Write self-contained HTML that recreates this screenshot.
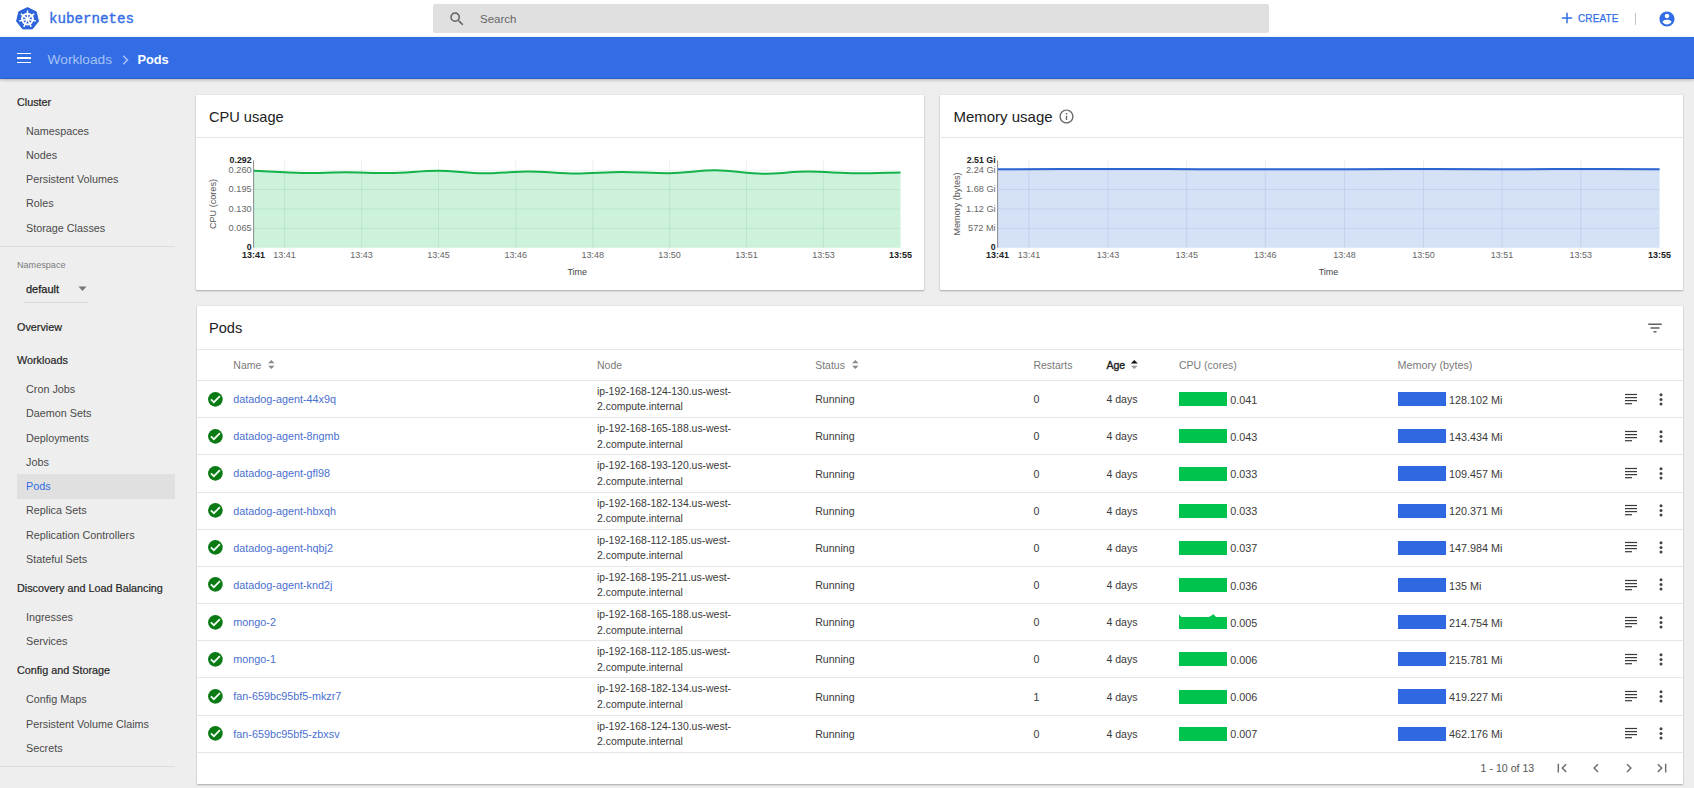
<!DOCTYPE html>
<html><head><meta charset="utf-8"><title>Pods - Kubernetes Dashboard</title>
<style>
html,body{margin:0;padding:0;}
body{width:1694px;height:788px;overflow:hidden;position:relative;background:#eeeeee;font-family:'Liberation Sans', sans-serif;}
.t{position:absolute;white-space:nowrap;z-index:2}
svg{z-index:2}
</style></head><body>
<div style="position:absolute;left:0px;top:0px;width:1694px;height:37px;background:#fff;"></div>
<svg style="position:absolute;left:0;top:0" width="60" height="37"><polygon points="27.50,7.60 36.26,11.82 38.42,21.29 32.36,28.89 22.64,28.89 16.58,21.29 18.74,11.82" fill="#2e63d9" stroke="#2e63d9" stroke-width="1" stroke-linejoin="round"/><circle cx="27.5" cy="19.1" r="5.4" fill="none" stroke="#fff" stroke-width="1.9"/><line x1="27.50" y1="17.60" x2="27.50" y2="11.10" stroke="#fff" stroke-width="1.5" stroke-linecap="round"/><line x1="28.67" y1="18.16" x2="33.75" y2="14.11" stroke="#fff" stroke-width="1.5" stroke-linecap="round"/><line x1="28.96" y1="19.43" x2="35.30" y2="20.88" stroke="#fff" stroke-width="1.5" stroke-linecap="round"/><line x1="28.15" y1="20.45" x2="30.97" y2="26.31" stroke="#fff" stroke-width="1.5" stroke-linecap="round"/><line x1="26.85" y1="20.45" x2="24.03" y2="26.31" stroke="#fff" stroke-width="1.5" stroke-linecap="round"/><line x1="26.04" y1="19.43" x2="19.70" y2="20.88" stroke="#fff" stroke-width="1.5" stroke-linecap="round"/><line x1="26.33" y1="18.16" x2="21.25" y2="14.11" stroke="#fff" stroke-width="1.5" stroke-linecap="round"/><circle cx="27.5" cy="19.1" r="1.6" fill="#fff"/></svg>
<div class="t" style="left:49px;top:8.98px;font-size:14.2px;line-height:20px;color:#326ce5;font-weight:normal;font-family:'Liberation Mono', monospace;-webkit-text-stroke:0.35px #326ce5;">kubernetes</div>
<div style="position:absolute;left:433px;top:4px;width:836px;height:29px;background:#e0e0e0;border-radius:2px;"></div>
<svg style="position:absolute;left:448px;top:10px" width="18" height="18" viewBox="0 0 24 24"><path fill="#616161" d="M15.5 14h-.79l-.28-.27A6.471 6.471 0 0 0 16 9.5 6.5 6.5 0 1 0 9.5 16c1.61 0 3.09-.59 4.23-1.57l.27.28v.79l5 4.99L20.49 19l-4.99-5zm-6 0C7.01 14 5 11.99 5 9.5S7.01 5 9.5 5 14 7.01 14 9.5 11.99 14 9.5 14z"/></svg>
<div class="t" style="left:480px;top:11.22px;font-size:11.5px;line-height:16px;color:#666;font-weight:normal;font-family:'Liberation Sans', sans-serif;">Search</div>
<svg style="position:absolute;left:1560px;top:11px" width="14" height="14"><path d="M7 1.8 V12.2 M1.8 7 H12.2" stroke="#326de6" stroke-width="1.5"/></svg>
<div class="t" style="left:1578px;top:12.14px;font-size:10px;line-height:14px;color:#326de6;font-weight:normal;font-family:'Liberation Sans', sans-serif;-webkit-text-stroke:0.25px #326de6;letter-spacing:0.1px;">CREATE</div>
<div style="position:absolute;left:1635px;top:12.5px;width:1px;height:12px;background:#c4c4c4;"></div>
<svg style="position:absolute;left:1658px;top:10px" width="18" height="18" viewBox="0 0 24 24"><path fill="#326de6" d="M12 2C6.48 2 2 6.48 2 12s4.48 10 10 10 10-4.48 10-10S17.52 2 12 2zm0 3c1.66 0 3 1.34 3 3s-1.34 3-3 3-3-1.34-3-3 1.34-3 3-3zm0 14.2c-2.5 0-4.71-1.28-6-3.22.03-1.99 4-3.08 6-3.08 1.99 0 5.97 1.09 6 3.08-1.29 1.94-3.5 3.22-6 3.22z"/></svg>
<div style="position:absolute;left:0px;top:37px;width:1694px;height:42px;background:#326de6;box-shadow:0 1px 3px rgba(0,0,0,0.25);z-index:2;"></div>
<div style="position:absolute;left:0px;top:78px;width:1694px;height:1px;background:#2c5ec9;z-index:2;"></div>
<div style="position:absolute;left:0;top:0;width:1694px;height:80px;z-index:3">
<div style="position:absolute;left:17px;top:52.6px;width:14.4px;height:1.8px;background:#fff;"></div>
<div style="position:absolute;left:17px;top:57.2px;width:14.4px;height:1.8px;background:#fff;"></div>
<div style="position:absolute;left:17px;top:61.6px;width:14.4px;height:1.8px;background:#fff;"></div>
<div class="t" style="left:47.6px;top:50.05px;font-size:13.7px;line-height:19px;color:#a8c1f4;font-weight:normal;font-family:'Liberation Sans', sans-serif;">Workloads</div>
<svg style="position:absolute;left:120px;top:54px" width="11" height="12" viewBox="0 0 11 12"><path fill="none" stroke="#a8c1f4" stroke-width="1.5" d="M3.2 1.8 L7.5 6 L3.2 10.2"/></svg>
<div class="t" style="left:137.4px;top:50.86px;font-size:12.8px;line-height:18px;color:#fff;font-weight:bold;font-family:'Liberation Sans', sans-serif;">Pods</div>
</div>
<div class="t" style="left:17px;top:94.96px;font-size:10.8px;line-height:15px;color:#262626;font-weight:normal;font-family:'Liberation Sans', sans-serif;-webkit-text-stroke:0.2px #262626;">Cluster</div>
<div class="t" style="left:26px;top:123.86px;font-size:10.8px;line-height:15px;color:#4a4a4a;font-weight:normal;font-family:'Liberation Sans', sans-serif;">Namespaces</div>
<div class="t" style="left:26px;top:148.06px;font-size:10.8px;line-height:15px;color:#4a4a4a;font-weight:normal;font-family:'Liberation Sans', sans-serif;">Nodes</div>
<div class="t" style="left:26px;top:172.26px;font-size:10.8px;line-height:15px;color:#4a4a4a;font-weight:normal;font-family:'Liberation Sans', sans-serif;">Persistent Volumes</div>
<div class="t" style="left:26px;top:196.46px;font-size:10.8px;line-height:15px;color:#4a4a4a;font-weight:normal;font-family:'Liberation Sans', sans-serif;">Roles</div>
<div class="t" style="left:26px;top:220.66px;font-size:10.8px;line-height:15px;color:#4a4a4a;font-weight:normal;font-family:'Liberation Sans', sans-serif;">Storage Classes</div>
<div style="position:absolute;left:0px;top:246px;width:175px;height:1px;background:#dcdcdc;"></div>
<div class="t" style="left:17px;top:259.15px;font-size:9.1px;line-height:13px;color:#7a7a7a;font-weight:normal;font-family:'Liberation Sans', sans-serif;">Namespace</div>
<div class="t" style="left:26px;top:281.99px;font-size:11px;line-height:15px;color:#1e1e1e;font-weight:normal;font-family:'Liberation Sans', sans-serif;-webkit-text-stroke:0.25px #1e1e1e;">default</div>
<svg style="position:absolute;left:77px;top:284px" width="11" height="9"><path d="M1.5 2.5 L9.5 2.5 L5.5 7 Z" fill="#757575"/></svg>
<div style="position:absolute;left:24px;top:301.5px;width:64px;height:1px;background:#d6d6d6;"></div>
<div class="t" style="left:17px;top:319.66px;font-size:10.8px;line-height:15px;color:#262626;font-weight:normal;font-family:'Liberation Sans', sans-serif;-webkit-text-stroke:0.2px #262626;">Overview</div>
<div class="t" style="left:17px;top:352.96px;font-size:10.8px;line-height:15px;color:#262626;font-weight:normal;font-family:'Liberation Sans', sans-serif;-webkit-text-stroke:0.2px #262626;">Workloads</div>
<div style="position:absolute;left:17px;top:474px;width:158px;height:24.5px;background:#e0e0e0;"></div>
<div class="t" style="left:26px;top:382.16px;font-size:10.8px;line-height:15px;color:#4a4a4a;font-weight:normal;font-family:'Liberation Sans', sans-serif;">Cron Jobs</div>
<div class="t" style="left:26px;top:406.42px;font-size:10.8px;line-height:15px;color:#4a4a4a;font-weight:normal;font-family:'Liberation Sans', sans-serif;">Daemon Sets</div>
<div class="t" style="left:26px;top:430.68px;font-size:10.8px;line-height:15px;color:#4a4a4a;font-weight:normal;font-family:'Liberation Sans', sans-serif;">Deployments</div>
<div class="t" style="left:26px;top:454.94px;font-size:10.8px;line-height:15px;color:#4a4a4a;font-weight:normal;font-family:'Liberation Sans', sans-serif;">Jobs</div>
<div class="t" style="left:26px;top:479.20px;font-size:10.8px;line-height:15px;color:#326de6;font-weight:normal;font-family:'Liberation Sans', sans-serif;">Pods</div>
<div class="t" style="left:26px;top:503.46px;font-size:10.8px;line-height:15px;color:#4a4a4a;font-weight:normal;font-family:'Liberation Sans', sans-serif;">Replica Sets</div>
<div class="t" style="left:26px;top:527.72px;font-size:10.8px;line-height:15px;color:#4a4a4a;font-weight:normal;font-family:'Liberation Sans', sans-serif;">Replication Controllers</div>
<div class="t" style="left:26px;top:551.98px;font-size:10.8px;line-height:15px;color:#4a4a4a;font-weight:normal;font-family:'Liberation Sans', sans-serif;">Stateful Sets</div>
<div class="t" style="left:17px;top:581.06px;font-size:10.8px;line-height:15px;color:#262626;font-weight:normal;font-family:'Liberation Sans', sans-serif;-webkit-text-stroke:0.2px #262626;">Discovery and Load Balancing</div>
<div class="t" style="left:26px;top:610.16px;font-size:10.8px;line-height:15px;color:#4a4a4a;font-weight:normal;font-family:'Liberation Sans', sans-serif;">Ingresses</div>
<div class="t" style="left:26px;top:634.36px;font-size:10.8px;line-height:15px;color:#4a4a4a;font-weight:normal;font-family:'Liberation Sans', sans-serif;">Services</div>
<div class="t" style="left:17px;top:663.36px;font-size:10.8px;line-height:15px;color:#262626;font-weight:normal;font-family:'Liberation Sans', sans-serif;-webkit-text-stroke:0.2px #262626;">Config and Storage</div>
<div class="t" style="left:26px;top:692.36px;font-size:10.8px;line-height:15px;color:#4a4a4a;font-weight:normal;font-family:'Liberation Sans', sans-serif;">Config Maps</div>
<div class="t" style="left:26px;top:716.56px;font-size:10.8px;line-height:15px;color:#4a4a4a;font-weight:normal;font-family:'Liberation Sans', sans-serif;">Persistent Volume Claims</div>
<div class="t" style="left:26px;top:740.76px;font-size:10.8px;line-height:15px;color:#4a4a4a;font-weight:normal;font-family:'Liberation Sans', sans-serif;">Secrets</div>
<div style="position:absolute;left:0px;top:765.5px;width:175px;height:1px;background:#dcdcdc;"></div>
<div style="position:absolute;left:196px;top:94.5px;width:727.5px;height:195.3px;background:#fff;box-shadow:0 1px 2px rgba(0,0,0,0.28),0 0 1px rgba(0,0,0,0.2);border-radius:1px"></div>
<div style="position:absolute;left:940px;top:94.5px;width:743px;height:195.3px;background:#fff;box-shadow:0 1px 2px rgba(0,0,0,0.28),0 0 1px rgba(0,0,0,0.2);border-radius:1px"></div>
<div style="position:absolute;left:196.5px;top:306px;width:1486px;height:478px;background:#fff;box-shadow:0 1px 2px rgba(0,0,0,0.28),0 0 1px rgba(0,0,0,0.2);border-radius:1px"></div>
<div class="t" style="left:209px;top:106.74px;font-size:14.6px;line-height:20px;color:#212121;font-weight:normal;font-family:'Liberation Sans', sans-serif;">CPU usage</div>
<div style="position:absolute;left:196px;top:137px;width:728px;height:1px;background:#e6e6e6;"></div>
<div class="t" style="left:953.4px;top:106.10px;font-size:15px;line-height:21px;color:#212121;font-weight:normal;font-family:'Liberation Sans', sans-serif;">Memory usage</div>
<svg style="position:absolute;left:1058px;top:108px" width="17" height="17" viewBox="0 0 24 24"><path fill="#6a6a6a" d="M11 7h2v2h-2zm0 4h2v6h-2zm1-9C6.48 2 2 6.48 2 12s4.48 10 10 10 10-4.48 10-10S17.52 2 12 2zm0 18c-4.41 0-8-3.59-8-8s3.59-8 8-8 8 3.59 8 8-3.59 8-8 8z"/></svg>
<div style="position:absolute;left:940.5px;top:137px;width:742.5px;height:1px;background:#e6e6e6;"></div>
<svg style="position:absolute;left:0;top:0;z-index:1" width="1694" height="300"><path d="M253.6,170.8 C261.67,170.96 286.60,172.89 302,173 C317.40,173.11 331.33,172.30 346,172.3 C360.67,172.30 374.67,173.11 390,173 C405.33,172.89 422.50,170.78 438,170.8 C453.50,170.82 467.90,173.24 483,173.3 C498.10,173.36 513.10,171.58 528.6,171.6 C544.10,171.62 560.55,173.57 576,173.6 C591.45,173.63 605.72,172.03 621.3,172 C636.88,171.97 653.73,173.32 669.5,173.2 C685.27,173.08 700.40,170.26 715.9,170.3 C731.40,170.34 747.18,173.61 762.5,173.7 C777.82,173.79 792.25,171.64 807.8,171.6 C823.35,171.56 840.35,173.14 855.8,173.2 C871.25,173.26 893.05,172.46 900.5,172.4 L900.5,247.7 L253.6,247.7 Z" fill="#ccf2dc"/><line x1="253.6" y1="170.3" x2="900.5" y2="170.3" stroke="rgba(0,80,30,0.075)" stroke-width="1"/><line x1="253.6" y1="189.6" x2="900.5" y2="189.6" stroke="rgba(0,80,30,0.075)" stroke-width="1"/><line x1="253.6" y1="209.0" x2="900.5" y2="209.0" stroke="rgba(0,80,30,0.075)" stroke-width="1"/><line x1="253.6" y1="228.4" x2="900.5" y2="228.4" stroke="rgba(0,80,30,0.075)" stroke-width="1"/><line x1="284.6" y1="160.3" x2="284.6" y2="247.7" stroke="rgba(0,80,30,0.075)" stroke-width="1"/><line x1="361.6" y1="160.3" x2="361.6" y2="247.7" stroke="rgba(0,80,30,0.075)" stroke-width="1"/><line x1="438.6" y1="160.3" x2="438.6" y2="247.7" stroke="rgba(0,80,30,0.075)" stroke-width="1"/><line x1="515.8" y1="160.3" x2="515.8" y2="247.7" stroke="rgba(0,80,30,0.075)" stroke-width="1"/><line x1="592.8" y1="160.3" x2="592.8" y2="247.7" stroke="rgba(0,80,30,0.075)" stroke-width="1"/><line x1="669.6" y1="160.3" x2="669.6" y2="247.7" stroke="rgba(0,80,30,0.075)" stroke-width="1"/><line x1="746.6" y1="160.3" x2="746.6" y2="247.7" stroke="rgba(0,80,30,0.075)" stroke-width="1"/><line x1="823.4" y1="160.3" x2="823.4" y2="247.7" stroke="rgba(0,80,30,0.075)" stroke-width="1"/><path d="M253.6,170.8 C261.67,170.96 286.60,172.89 302,173 C317.40,173.11 331.33,172.30 346,172.3 C360.67,172.30 374.67,173.11 390,173 C405.33,172.89 422.50,170.78 438,170.8 C453.50,170.82 467.90,173.24 483,173.3 C498.10,173.36 513.10,171.58 528.6,171.6 C544.10,171.62 560.55,173.57 576,173.6 C591.45,173.63 605.72,172.03 621.3,172 C636.88,171.97 653.73,173.32 669.5,173.2 C685.27,173.08 700.40,170.26 715.9,170.3 C731.40,170.34 747.18,173.61 762.5,173.7 C777.82,173.79 792.25,171.64 807.8,171.6 C823.35,171.56 840.35,173.14 855.8,173.2 C871.25,173.26 893.05,172.46 900.5,172.4" fill="none" stroke="#13b24a" stroke-width="2"/><line x1="253.6" y1="160.3" x2="253.6" y2="247.7" stroke="#8a8a8a" stroke-width="1"/></svg>
<div class="t" style="right:1442.4px;top:154.15px;font-size:8.8px;line-height:12px;color:#222;font-weight:bold;font-family:'Liberation Sans', sans-serif;">0.292</div>
<div class="t" style="right:1442.4px;top:163.81px;font-size:9.2px;line-height:13px;color:#666;font-weight:normal;font-family:'Liberation Sans', sans-serif;">0.260</div>
<div class="t" style="right:1442.4px;top:183.11px;font-size:9.2px;line-height:13px;color:#666;font-weight:normal;font-family:'Liberation Sans', sans-serif;">0.195</div>
<div class="t" style="right:1442.4px;top:202.51px;font-size:9.2px;line-height:13px;color:#666;font-weight:normal;font-family:'Liberation Sans', sans-serif;">0.130</div>
<div class="t" style="right:1442.4px;top:221.91px;font-size:9.2px;line-height:13px;color:#666;font-weight:normal;font-family:'Liberation Sans', sans-serif;">0.065</div>
<div class="t" style="right:1442.4px;top:241.45px;font-size:8.8px;line-height:12px;color:#222;font-weight:bold;font-family:'Liberation Sans', sans-serif;">0</div>
<div class="t" style="left:53.599999999999994px;width:400px;text-align:center;top:249.18px;font-size:9px;line-height:13px;color:#222;font-weight:bold;font-family:'Liberation Sans', sans-serif;">13:41</div>
<div class="t" style="left:84.60000000000002px;width:400px;text-align:center;top:249.18px;font-size:9px;line-height:13px;color:#666;font-weight:normal;font-family:'Liberation Sans', sans-serif;">13:41</div>
<div class="t" style="left:161.60000000000002px;width:400px;text-align:center;top:249.18px;font-size:9px;line-height:13px;color:#666;font-weight:normal;font-family:'Liberation Sans', sans-serif;">13:43</div>
<div class="t" style="left:238.60000000000002px;width:400px;text-align:center;top:249.18px;font-size:9px;line-height:13px;color:#666;font-weight:normal;font-family:'Liberation Sans', sans-serif;">13:45</div>
<div class="t" style="left:315.79999999999995px;width:400px;text-align:center;top:249.18px;font-size:9px;line-height:13px;color:#666;font-weight:normal;font-family:'Liberation Sans', sans-serif;">13:46</div>
<div class="t" style="left:392.79999999999995px;width:400px;text-align:center;top:249.18px;font-size:9px;line-height:13px;color:#666;font-weight:normal;font-family:'Liberation Sans', sans-serif;">13:48</div>
<div class="t" style="left:469.6px;width:400px;text-align:center;top:249.18px;font-size:9px;line-height:13px;color:#666;font-weight:normal;font-family:'Liberation Sans', sans-serif;">13:50</div>
<div class="t" style="left:546.6px;width:400px;text-align:center;top:249.18px;font-size:9px;line-height:13px;color:#666;font-weight:normal;font-family:'Liberation Sans', sans-serif;">13:51</div>
<div class="t" style="left:623.4px;width:400px;text-align:center;top:249.18px;font-size:9px;line-height:13px;color:#666;font-weight:normal;font-family:'Liberation Sans', sans-serif;">13:53</div>
<div class="t" style="left:700.5px;width:400px;text-align:center;top:249.18px;font-size:9px;line-height:13px;color:#222;font-weight:bold;font-family:'Liberation Sans', sans-serif;">13:55</div>
<div class="t" style="left:377.29999999999995px;width:400px;text-align:center;top:266.38px;font-size:9px;line-height:13px;color:#444;font-weight:normal;font-family:'Liberation Sans', sans-serif;">Time</div>
<div class="t" style="left:152.8px;top:197px;width:120px;text-align:center;font-size:9.1px;line-height:14px;color:#555;transform:rotate(-90deg)">CPU (cores)</div>
<svg style="position:absolute;left:0;top:0;z-index:1" width="1694" height="300"><path d="M997.6,169.3 C1014.67,169.27 1066.27,168.91 1100,168.9 C1133.73,168.89 1166.67,169.17 1200,169.2 C1233.33,169.23 1266.67,169.31 1300,169.3 C1333.33,169.29 1366.67,169.11 1400,169.1 C1433.33,169.09 1470.00,169.21 1500,169.2 C1530.00,169.19 1553.40,168.99 1580,169.0 C1606.60,169.01 1646.33,169.28 1659.6,169.3 L1659.6,247.7 L997.6,247.7 Z" fill="#d5e1f7"/><line x1="997.6" y1="170.3" x2="1659.6" y2="170.3" stroke="rgba(0,30,90,0.075)" stroke-width="1"/><line x1="997.6" y1="189.6" x2="1659.6" y2="189.6" stroke="rgba(0,30,90,0.075)" stroke-width="1"/><line x1="997.6" y1="209.0" x2="1659.6" y2="209.0" stroke="rgba(0,30,90,0.075)" stroke-width="1"/><line x1="997.6" y1="228.4" x2="1659.6" y2="228.4" stroke="rgba(0,30,90,0.075)" stroke-width="1"/><line x1="1028.9" y1="160.3" x2="1028.9" y2="247.7" stroke="rgba(0,30,90,0.075)" stroke-width="1"/><line x1="1108" y1="160.3" x2="1108" y2="247.7" stroke="rgba(0,30,90,0.075)" stroke-width="1"/><line x1="1186.7" y1="160.3" x2="1186.7" y2="247.7" stroke="rgba(0,30,90,0.075)" stroke-width="1"/><line x1="1265.3" y1="160.3" x2="1265.3" y2="247.7" stroke="rgba(0,30,90,0.075)" stroke-width="1"/><line x1="1344.6" y1="160.3" x2="1344.6" y2="247.7" stroke="rgba(0,30,90,0.075)" stroke-width="1"/><line x1="1423.5" y1="160.3" x2="1423.5" y2="247.7" stroke="rgba(0,30,90,0.075)" stroke-width="1"/><line x1="1502.1" y1="160.3" x2="1502.1" y2="247.7" stroke="rgba(0,30,90,0.075)" stroke-width="1"/><line x1="1580.8" y1="160.3" x2="1580.8" y2="247.7" stroke="rgba(0,30,90,0.075)" stroke-width="1"/><path d="M997.6,169.3 C1014.67,169.27 1066.27,168.91 1100,168.9 C1133.73,168.89 1166.67,169.17 1200,169.2 C1233.33,169.23 1266.67,169.31 1300,169.3 C1333.33,169.29 1366.67,169.11 1400,169.1 C1433.33,169.09 1470.00,169.21 1500,169.2 C1530.00,169.19 1553.40,168.99 1580,169.0 C1606.60,169.01 1646.33,169.28 1659.6,169.3" fill="none" stroke="#2c64d2" stroke-width="2"/><line x1="997.6" y1="160.3" x2="997.6" y2="247.7" stroke="#8a8a8a" stroke-width="1"/></svg>
<div class="t" style="right:698.4px;top:154.15px;font-size:8.8px;line-height:12px;color:#222;font-weight:bold;font-family:'Liberation Sans', sans-serif;">2.51 Gi</div>
<div class="t" style="right:698.4px;top:163.81px;font-size:9.2px;line-height:13px;color:#666;font-weight:normal;font-family:'Liberation Sans', sans-serif;">2.24 Gi</div>
<div class="t" style="right:698.4px;top:183.11px;font-size:9.2px;line-height:13px;color:#666;font-weight:normal;font-family:'Liberation Sans', sans-serif;">1.68 Gi</div>
<div class="t" style="right:698.4px;top:202.51px;font-size:9.2px;line-height:13px;color:#666;font-weight:normal;font-family:'Liberation Sans', sans-serif;">1.12 Gi</div>
<div class="t" style="right:698.4px;top:221.91px;font-size:9.2px;line-height:13px;color:#666;font-weight:normal;font-family:'Liberation Sans', sans-serif;">572 Mi</div>
<div class="t" style="right:698.4px;top:241.45px;font-size:8.8px;line-height:12px;color:#222;font-weight:bold;font-family:'Liberation Sans', sans-serif;">0</div>
<div class="t" style="left:797.6px;width:400px;text-align:center;top:249.18px;font-size:9px;line-height:13px;color:#222;font-weight:bold;font-family:'Liberation Sans', sans-serif;">13:41</div>
<div class="t" style="left:828.9000000000001px;width:400px;text-align:center;top:249.18px;font-size:9px;line-height:13px;color:#666;font-weight:normal;font-family:'Liberation Sans', sans-serif;">13:41</div>
<div class="t" style="left:908px;width:400px;text-align:center;top:249.18px;font-size:9px;line-height:13px;color:#666;font-weight:normal;font-family:'Liberation Sans', sans-serif;">13:43</div>
<div class="t" style="left:986.7px;width:400px;text-align:center;top:249.18px;font-size:9px;line-height:13px;color:#666;font-weight:normal;font-family:'Liberation Sans', sans-serif;">13:45</div>
<div class="t" style="left:1065.3px;width:400px;text-align:center;top:249.18px;font-size:9px;line-height:13px;color:#666;font-weight:normal;font-family:'Liberation Sans', sans-serif;">13:46</div>
<div class="t" style="left:1144.6px;width:400px;text-align:center;top:249.18px;font-size:9px;line-height:13px;color:#666;font-weight:normal;font-family:'Liberation Sans', sans-serif;">13:48</div>
<div class="t" style="left:1223.5px;width:400px;text-align:center;top:249.18px;font-size:9px;line-height:13px;color:#666;font-weight:normal;font-family:'Liberation Sans', sans-serif;">13:50</div>
<div class="t" style="left:1302.1px;width:400px;text-align:center;top:249.18px;font-size:9px;line-height:13px;color:#666;font-weight:normal;font-family:'Liberation Sans', sans-serif;">13:51</div>
<div class="t" style="left:1380.8px;width:400px;text-align:center;top:249.18px;font-size:9px;line-height:13px;color:#666;font-weight:normal;font-family:'Liberation Sans', sans-serif;">13:53</div>
<div class="t" style="left:1459.6px;width:400px;text-align:center;top:249.18px;font-size:9px;line-height:13px;color:#222;font-weight:bold;font-family:'Liberation Sans', sans-serif;">13:55</div>
<div class="t" style="left:1128.5px;width:400px;text-align:center;top:266.38px;font-size:9px;line-height:13px;color:#444;font-weight:normal;font-family:'Liberation Sans', sans-serif;">Time</div>
<div class="t" style="left:896.5px;top:197px;width:120px;text-align:center;font-size:9.1px;line-height:14px;color:#555;transform:rotate(-90deg)">Memory (bytes)</div>
<div class="t" style="left:209px;top:317.94px;font-size:14.6px;line-height:20px;color:#212121;font-weight:normal;font-family:'Liberation Sans', sans-serif;">Pods</div>
<svg style="position:absolute;left:1646px;top:318.5px" width="18" height="18" viewBox="0 0 24 24"><path fill="#616161" d="M10 18h4v-2h-4v2zM3 6v2h18V6H3zm3 7h12v-2H6v2z"/></svg>
<div style="position:absolute;left:196.5px;top:349px;width:1486px;height:1px;background:#e6e6e6;"></div>
<div class="t" style="left:233.3px;top:358.26px;font-size:10.5px;line-height:15px;color:#7a7a7a;font-weight:normal;font-family:'Liberation Sans', sans-serif;">Name</div>
<svg style="position:absolute;left:267px;top:359px" width="9" height="11"><path d="M1 4.3 L4.3 1 L7.6 4.3 Z M1 6.7 L4.3 10 L7.6 6.7 Z" fill="#8a8a8a"/></svg>
<div class="t" style="left:597px;top:358.26px;font-size:10.5px;line-height:15px;color:#7a7a7a;font-weight:normal;font-family:'Liberation Sans', sans-serif;">Node</div>
<div class="t" style="left:815.2px;top:358.26px;font-size:10.5px;line-height:15px;color:#7a7a7a;font-weight:normal;font-family:'Liberation Sans', sans-serif;">Status</div>
<svg style="position:absolute;left:851px;top:359px" width="9" height="11"><path d="M1 4.3 L4.3 1 L7.6 4.3 Z M1 6.7 L4.3 10 L7.6 6.7 Z" fill="#8a8a8a"/></svg>
<div class="t" style="left:1033.4px;top:358.26px;font-size:10.5px;line-height:15px;color:#7a7a7a;font-weight:normal;font-family:'Liberation Sans', sans-serif;">Restarts</div>
<div class="t" style="left:1106.4px;top:358.23px;font-size:10.6px;line-height:15px;color:#1a1a1a;font-weight:normal;font-family:'Liberation Sans', sans-serif;-webkit-text-stroke:0.35px #1a1a1a;">Age</div>
<svg style="position:absolute;left:1130px;top:359px" width="9" height="11"><path d="M0.8 4.6 L4.3 1 L7.8 4.6 Z" fill="#111"/><path d="M1 6.7 L4.3 10 L7.6 6.7 Z" fill="#9a9a9a"/></svg>
<div class="t" style="left:1179px;top:358.26px;font-size:10.5px;line-height:15px;color:#7a7a7a;font-weight:normal;font-family:'Liberation Sans', sans-serif;">CPU (cores)</div>
<div class="t" style="left:1397.4px;top:358.16px;font-size:10.8px;line-height:15px;color:#7a7a7a;font-weight:normal;font-family:'Liberation Sans', sans-serif;">Memory (bytes)</div>
<div style="position:absolute;left:196.5px;top:380px;width:1486px;height:1px;background:#e6e6e6;"></div>
<svg style="position:absolute;left:207.6px;top:391.60px" width="15" height="15" viewBox="0 0 15 15"><circle cx="7.4" cy="7.4" r="7.3" fill="#0a7a14"/><path d="M2.9 7.3 L5.9 10.2 L11.9 4.2" fill="none" stroke="#f4fff4" stroke-width="1.8"/></svg>
<div class="t" style="left:233.3px;top:392.06px;font-size:10.8px;line-height:15px;color:#4a70d0;font-weight:normal;font-family:'Liberation Sans', sans-serif;">datadog-agent-44x9q</div>
<div class="t" style="left:597px;top:384.08px;font-size:10.45px;line-height:15px;color:#3a3a3a;font-weight:normal;font-family:'Liberation Sans', sans-serif;">ip-192-168-124-130.us-west-</div>
<div class="t" style="left:597px;top:399.48px;font-size:10.45px;line-height:15px;color:#3a3a3a;font-weight:normal;font-family:'Liberation Sans', sans-serif;">2.compute.internal</div>
<div class="t" style="left:815.2px;top:392.23px;font-size:10.6px;line-height:15px;color:#3a3a3a;font-weight:normal;font-family:'Liberation Sans', sans-serif;">Running</div>
<div class="t" style="left:1033.4px;top:392.23px;font-size:10.6px;line-height:15px;color:#3a3a3a;font-weight:normal;font-family:'Liberation Sans', sans-serif;">0</div>
<div class="t" style="left:1106.4px;top:392.23px;font-size:10.6px;line-height:15px;color:#3a3a3a;font-weight:normal;font-family:'Liberation Sans', sans-serif;">4 days</div>
<div style="position:absolute;left:1179px;top:392.2px;width:48px;height:14px;background:#00c34e;"></div>
<div class="t" style="left:1230.3px;top:392.66px;font-size:10.8px;line-height:15px;color:#3a3a3a;font-weight:normal;font-family:'Liberation Sans', sans-serif;">0.041</div>
<div style="position:absolute;left:1398px;top:392.1px;width:48px;height:14.2px;background:#2f68e0;"></div>
<div class="t" style="left:1449px;top:392.66px;font-size:10.8px;line-height:15px;color:#3a3a3a;font-weight:normal;font-family:'Liberation Sans', sans-serif;">128.102 Mi</div>
<svg style="position:absolute;left:1624px;top:392.80px" width="14" height="12"><g fill="#3a3a3a"><rect x="1" y="0.9" width="12" height="1.2"/><rect x="1" y="4.0" width="12" height="1.2"/><rect x="1" y="7.0" width="12" height="1.2"/><rect x="1" y="10.1" width="7" height="1.2"/></g></svg>
<svg style="position:absolute;left:1658px;top:392.50px" width="6" height="14"><g fill="#444"><circle cx="3" cy="1.8" r="1.5"/><circle cx="3" cy="6.4" r="1.5"/><circle cx="3" cy="11" r="1.5"/></g></svg>
<div style="position:absolute;left:196.5px;top:417.17px;width:1486px;height:1px;background:#e6e6e6;"></div>
<svg style="position:absolute;left:207.6px;top:428.77px" width="15" height="15" viewBox="0 0 15 15"><circle cx="7.4" cy="7.4" r="7.3" fill="#0a7a14"/><path d="M2.9 7.3 L5.9 10.2 L11.9 4.2" fill="none" stroke="#f4fff4" stroke-width="1.8"/></svg>
<div class="t" style="left:233.3px;top:429.23px;font-size:10.8px;line-height:15px;color:#4a70d0;font-weight:normal;font-family:'Liberation Sans', sans-serif;">datadog-agent-8ngmb</div>
<div class="t" style="left:597px;top:421.25px;font-size:10.45px;line-height:15px;color:#3a3a3a;font-weight:normal;font-family:'Liberation Sans', sans-serif;">ip-192-168-165-188.us-west-</div>
<div class="t" style="left:597px;top:436.65px;font-size:10.45px;line-height:15px;color:#3a3a3a;font-weight:normal;font-family:'Liberation Sans', sans-serif;">2.compute.internal</div>
<div class="t" style="left:815.2px;top:429.40px;font-size:10.6px;line-height:15px;color:#3a3a3a;font-weight:normal;font-family:'Liberation Sans', sans-serif;">Running</div>
<div class="t" style="left:1033.4px;top:429.40px;font-size:10.6px;line-height:15px;color:#3a3a3a;font-weight:normal;font-family:'Liberation Sans', sans-serif;">0</div>
<div class="t" style="left:1106.4px;top:429.40px;font-size:10.6px;line-height:15px;color:#3a3a3a;font-weight:normal;font-family:'Liberation Sans', sans-serif;">4 days</div>
<div style="position:absolute;left:1179px;top:429.37px;width:48px;height:14px;background:#00c34e;"></div>
<div class="t" style="left:1230.3px;top:429.83px;font-size:10.8px;line-height:15px;color:#3a3a3a;font-weight:normal;font-family:'Liberation Sans', sans-serif;">0.043</div>
<div style="position:absolute;left:1398px;top:429.27000000000004px;width:48px;height:14.2px;background:#2f68e0;"></div>
<div class="t" style="left:1449px;top:429.83px;font-size:10.8px;line-height:15px;color:#3a3a3a;font-weight:normal;font-family:'Liberation Sans', sans-serif;">143.434 Mi</div>
<svg style="position:absolute;left:1624px;top:429.97px" width="14" height="12"><g fill="#3a3a3a"><rect x="1" y="0.9" width="12" height="1.2"/><rect x="1" y="4.0" width="12" height="1.2"/><rect x="1" y="7.0" width="12" height="1.2"/><rect x="1" y="10.1" width="7" height="1.2"/></g></svg>
<svg style="position:absolute;left:1658px;top:429.67px" width="6" height="14"><g fill="#444"><circle cx="3" cy="1.8" r="1.5"/><circle cx="3" cy="6.4" r="1.5"/><circle cx="3" cy="11" r="1.5"/></g></svg>
<div style="position:absolute;left:196.5px;top:454.34000000000003px;width:1486px;height:1px;background:#e6e6e6;"></div>
<svg style="position:absolute;left:207.6px;top:465.94px" width="15" height="15" viewBox="0 0 15 15"><circle cx="7.4" cy="7.4" r="7.3" fill="#0a7a14"/><path d="M2.9 7.3 L5.9 10.2 L11.9 4.2" fill="none" stroke="#f4fff4" stroke-width="1.8"/></svg>
<div class="t" style="left:233.3px;top:466.40px;font-size:10.8px;line-height:15px;color:#4a70d0;font-weight:normal;font-family:'Liberation Sans', sans-serif;">datadog-agent-gfl98</div>
<div class="t" style="left:597px;top:458.42px;font-size:10.45px;line-height:15px;color:#3a3a3a;font-weight:normal;font-family:'Liberation Sans', sans-serif;">ip-192-168-193-120.us-west-</div>
<div class="t" style="left:597px;top:473.82px;font-size:10.45px;line-height:15px;color:#3a3a3a;font-weight:normal;font-family:'Liberation Sans', sans-serif;">2.compute.internal</div>
<div class="t" style="left:815.2px;top:466.57px;font-size:10.6px;line-height:15px;color:#3a3a3a;font-weight:normal;font-family:'Liberation Sans', sans-serif;">Running</div>
<div class="t" style="left:1033.4px;top:466.57px;font-size:10.6px;line-height:15px;color:#3a3a3a;font-weight:normal;font-family:'Liberation Sans', sans-serif;">0</div>
<div class="t" style="left:1106.4px;top:466.57px;font-size:10.6px;line-height:15px;color:#3a3a3a;font-weight:normal;font-family:'Liberation Sans', sans-serif;">4 days</div>
<div style="position:absolute;left:1179px;top:466.53999999999996px;width:48px;height:14px;background:#00c34e;"></div>
<div class="t" style="left:1230.3px;top:467.00px;font-size:10.8px;line-height:15px;color:#3a3a3a;font-weight:normal;font-family:'Liberation Sans', sans-serif;">0.033</div>
<div style="position:absolute;left:1398px;top:466.44px;width:48px;height:14.2px;background:#2f68e0;"></div>
<div class="t" style="left:1449px;top:467.00px;font-size:10.8px;line-height:15px;color:#3a3a3a;font-weight:normal;font-family:'Liberation Sans', sans-serif;">109.457 Mi</div>
<svg style="position:absolute;left:1624px;top:467.14px" width="14" height="12"><g fill="#3a3a3a"><rect x="1" y="0.9" width="12" height="1.2"/><rect x="1" y="4.0" width="12" height="1.2"/><rect x="1" y="7.0" width="12" height="1.2"/><rect x="1" y="10.1" width="7" height="1.2"/></g></svg>
<svg style="position:absolute;left:1658px;top:466.84px" width="6" height="14"><g fill="#444"><circle cx="3" cy="1.8" r="1.5"/><circle cx="3" cy="6.4" r="1.5"/><circle cx="3" cy="11" r="1.5"/></g></svg>
<div style="position:absolute;left:196.5px;top:491.51px;width:1486px;height:1px;background:#e6e6e6;"></div>
<svg style="position:absolute;left:207.6px;top:503.11px" width="15" height="15" viewBox="0 0 15 15"><circle cx="7.4" cy="7.4" r="7.3" fill="#0a7a14"/><path d="M2.9 7.3 L5.9 10.2 L11.9 4.2" fill="none" stroke="#f4fff4" stroke-width="1.8"/></svg>
<div class="t" style="left:233.3px;top:503.57px;font-size:10.8px;line-height:15px;color:#4a70d0;font-weight:normal;font-family:'Liberation Sans', sans-serif;">datadog-agent-hbxqh</div>
<div class="t" style="left:597px;top:495.59px;font-size:10.45px;line-height:15px;color:#3a3a3a;font-weight:normal;font-family:'Liberation Sans', sans-serif;">ip-192-168-182-134.us-west-</div>
<div class="t" style="left:597px;top:510.99px;font-size:10.45px;line-height:15px;color:#3a3a3a;font-weight:normal;font-family:'Liberation Sans', sans-serif;">2.compute.internal</div>
<div class="t" style="left:815.2px;top:503.74px;font-size:10.6px;line-height:15px;color:#3a3a3a;font-weight:normal;font-family:'Liberation Sans', sans-serif;">Running</div>
<div class="t" style="left:1033.4px;top:503.74px;font-size:10.6px;line-height:15px;color:#3a3a3a;font-weight:normal;font-family:'Liberation Sans', sans-serif;">0</div>
<div class="t" style="left:1106.4px;top:503.74px;font-size:10.6px;line-height:15px;color:#3a3a3a;font-weight:normal;font-family:'Liberation Sans', sans-serif;">4 days</div>
<div style="position:absolute;left:1179px;top:503.71px;width:48px;height:14px;background:#00c34e;"></div>
<div class="t" style="left:1230.3px;top:504.17px;font-size:10.8px;line-height:15px;color:#3a3a3a;font-weight:normal;font-family:'Liberation Sans', sans-serif;">0.033</div>
<div style="position:absolute;left:1398px;top:503.61px;width:48px;height:14.2px;background:#2f68e0;"></div>
<div class="t" style="left:1449px;top:504.17px;font-size:10.8px;line-height:15px;color:#3a3a3a;font-weight:normal;font-family:'Liberation Sans', sans-serif;">120.371 Mi</div>
<svg style="position:absolute;left:1624px;top:504.31px" width="14" height="12"><g fill="#3a3a3a"><rect x="1" y="0.9" width="12" height="1.2"/><rect x="1" y="4.0" width="12" height="1.2"/><rect x="1" y="7.0" width="12" height="1.2"/><rect x="1" y="10.1" width="7" height="1.2"/></g></svg>
<svg style="position:absolute;left:1658px;top:504.01px" width="6" height="14"><g fill="#444"><circle cx="3" cy="1.8" r="1.5"/><circle cx="3" cy="6.4" r="1.5"/><circle cx="3" cy="11" r="1.5"/></g></svg>
<div style="position:absolute;left:196.5px;top:528.6800000000001px;width:1486px;height:1px;background:#e6e6e6;"></div>
<svg style="position:absolute;left:207.6px;top:540.28px" width="15" height="15" viewBox="0 0 15 15"><circle cx="7.4" cy="7.4" r="7.3" fill="#0a7a14"/><path d="M2.9 7.3 L5.9 10.2 L11.9 4.2" fill="none" stroke="#f4fff4" stroke-width="1.8"/></svg>
<div class="t" style="left:233.3px;top:540.74px;font-size:10.8px;line-height:15px;color:#4a70d0;font-weight:normal;font-family:'Liberation Sans', sans-serif;">datadog-agent-hqbj2</div>
<div class="t" style="left:597px;top:532.76px;font-size:10.45px;line-height:15px;color:#3a3a3a;font-weight:normal;font-family:'Liberation Sans', sans-serif;">ip-192-168-112-185.us-west-</div>
<div class="t" style="left:597px;top:548.16px;font-size:10.45px;line-height:15px;color:#3a3a3a;font-weight:normal;font-family:'Liberation Sans', sans-serif;">2.compute.internal</div>
<div class="t" style="left:815.2px;top:540.91px;font-size:10.6px;line-height:15px;color:#3a3a3a;font-weight:normal;font-family:'Liberation Sans', sans-serif;">Running</div>
<div class="t" style="left:1033.4px;top:540.91px;font-size:10.6px;line-height:15px;color:#3a3a3a;font-weight:normal;font-family:'Liberation Sans', sans-serif;">0</div>
<div class="t" style="left:1106.4px;top:540.91px;font-size:10.6px;line-height:15px;color:#3a3a3a;font-weight:normal;font-family:'Liberation Sans', sans-serif;">4 days</div>
<div style="position:absolute;left:1179px;top:540.88px;width:48px;height:14px;background:#00c34e;"></div>
<div class="t" style="left:1230.3px;top:541.34px;font-size:10.8px;line-height:15px;color:#3a3a3a;font-weight:normal;font-family:'Liberation Sans', sans-serif;">0.037</div>
<div style="position:absolute;left:1398px;top:540.78px;width:48px;height:14.2px;background:#2f68e0;"></div>
<div class="t" style="left:1449px;top:541.34px;font-size:10.8px;line-height:15px;color:#3a3a3a;font-weight:normal;font-family:'Liberation Sans', sans-serif;">147.984 Mi</div>
<svg style="position:absolute;left:1624px;top:541.48px" width="14" height="12"><g fill="#3a3a3a"><rect x="1" y="0.9" width="12" height="1.2"/><rect x="1" y="4.0" width="12" height="1.2"/><rect x="1" y="7.0" width="12" height="1.2"/><rect x="1" y="10.1" width="7" height="1.2"/></g></svg>
<svg style="position:absolute;left:1658px;top:541.18px" width="6" height="14"><g fill="#444"><circle cx="3" cy="1.8" r="1.5"/><circle cx="3" cy="6.4" r="1.5"/><circle cx="3" cy="11" r="1.5"/></g></svg>
<div style="position:absolute;left:196.5px;top:565.85px;width:1486px;height:1px;background:#e6e6e6;"></div>
<svg style="position:absolute;left:207.6px;top:577.45px" width="15" height="15" viewBox="0 0 15 15"><circle cx="7.4" cy="7.4" r="7.3" fill="#0a7a14"/><path d="M2.9 7.3 L5.9 10.2 L11.9 4.2" fill="none" stroke="#f4fff4" stroke-width="1.8"/></svg>
<div class="t" style="left:233.3px;top:577.91px;font-size:10.8px;line-height:15px;color:#4a70d0;font-weight:normal;font-family:'Liberation Sans', sans-serif;">datadog-agent-knd2j</div>
<div class="t" style="left:597px;top:569.93px;font-size:10.45px;line-height:15px;color:#3a3a3a;font-weight:normal;font-family:'Liberation Sans', sans-serif;">ip-192-168-195-211.us-west-</div>
<div class="t" style="left:597px;top:585.33px;font-size:10.45px;line-height:15px;color:#3a3a3a;font-weight:normal;font-family:'Liberation Sans', sans-serif;">2.compute.internal</div>
<div class="t" style="left:815.2px;top:578.08px;font-size:10.6px;line-height:15px;color:#3a3a3a;font-weight:normal;font-family:'Liberation Sans', sans-serif;">Running</div>
<div class="t" style="left:1033.4px;top:578.08px;font-size:10.6px;line-height:15px;color:#3a3a3a;font-weight:normal;font-family:'Liberation Sans', sans-serif;">0</div>
<div class="t" style="left:1106.4px;top:578.08px;font-size:10.6px;line-height:15px;color:#3a3a3a;font-weight:normal;font-family:'Liberation Sans', sans-serif;">4 days</div>
<div style="position:absolute;left:1179px;top:578.0500000000001px;width:48px;height:14px;background:#00c34e;"></div>
<div class="t" style="left:1230.3px;top:578.51px;font-size:10.8px;line-height:15px;color:#3a3a3a;font-weight:normal;font-family:'Liberation Sans', sans-serif;">0.036</div>
<div style="position:absolute;left:1398px;top:577.95px;width:48px;height:14.2px;background:#2f68e0;"></div>
<div class="t" style="left:1449px;top:578.51px;font-size:10.8px;line-height:15px;color:#3a3a3a;font-weight:normal;font-family:'Liberation Sans', sans-serif;">135 Mi</div>
<svg style="position:absolute;left:1624px;top:578.65px" width="14" height="12"><g fill="#3a3a3a"><rect x="1" y="0.9" width="12" height="1.2"/><rect x="1" y="4.0" width="12" height="1.2"/><rect x="1" y="7.0" width="12" height="1.2"/><rect x="1" y="10.1" width="7" height="1.2"/></g></svg>
<svg style="position:absolute;left:1658px;top:578.35px" width="6" height="14"><g fill="#444"><circle cx="3" cy="1.8" r="1.5"/><circle cx="3" cy="6.4" r="1.5"/><circle cx="3" cy="11" r="1.5"/></g></svg>
<div style="position:absolute;left:196.5px;top:603.0200000000001px;width:1486px;height:1px;background:#e6e6e6;"></div>
<svg style="position:absolute;left:207.6px;top:614.62px" width="15" height="15" viewBox="0 0 15 15"><circle cx="7.4" cy="7.4" r="7.3" fill="#0a7a14"/><path d="M2.9 7.3 L5.9 10.2 L11.9 4.2" fill="none" stroke="#f4fff4" stroke-width="1.8"/></svg>
<div class="t" style="left:233.3px;top:615.08px;font-size:10.8px;line-height:15px;color:#4a70d0;font-weight:normal;font-family:'Liberation Sans', sans-serif;">mongo-2</div>
<div class="t" style="left:597px;top:607.10px;font-size:10.45px;line-height:15px;color:#3a3a3a;font-weight:normal;font-family:'Liberation Sans', sans-serif;">ip-192-168-165-188.us-west-</div>
<div class="t" style="left:597px;top:622.50px;font-size:10.45px;line-height:15px;color:#3a3a3a;font-weight:normal;font-family:'Liberation Sans', sans-serif;">2.compute.internal</div>
<div class="t" style="left:815.2px;top:615.25px;font-size:10.6px;line-height:15px;color:#3a3a3a;font-weight:normal;font-family:'Liberation Sans', sans-serif;">Running</div>
<div class="t" style="left:1033.4px;top:615.25px;font-size:10.6px;line-height:15px;color:#3a3a3a;font-weight:normal;font-family:'Liberation Sans', sans-serif;">0</div>
<div class="t" style="left:1106.4px;top:615.25px;font-size:10.6px;line-height:15px;color:#3a3a3a;font-weight:normal;font-family:'Liberation Sans', sans-serif;">4 days</div>
<svg style="position:absolute;left:1179px;top:613.32px" width="48" height="18"><path d="M0 1.5 L2.5 4 L30 4 L34.5 1.2 L37 4 L48 4 L48 16 L0 16 Z" fill="#00c34e"/></svg>
<div class="t" style="left:1230.3px;top:615.68px;font-size:10.8px;line-height:15px;color:#3a3a3a;font-weight:normal;font-family:'Liberation Sans', sans-serif;">0.005</div>
<div style="position:absolute;left:1398px;top:615.12px;width:48px;height:14.2px;background:#2f68e0;"></div>
<div class="t" style="left:1449px;top:615.68px;font-size:10.8px;line-height:15px;color:#3a3a3a;font-weight:normal;font-family:'Liberation Sans', sans-serif;">214.754 Mi</div>
<svg style="position:absolute;left:1624px;top:615.82px" width="14" height="12"><g fill="#3a3a3a"><rect x="1" y="0.9" width="12" height="1.2"/><rect x="1" y="4.0" width="12" height="1.2"/><rect x="1" y="7.0" width="12" height="1.2"/><rect x="1" y="10.1" width="7" height="1.2"/></g></svg>
<svg style="position:absolute;left:1658px;top:615.52px" width="6" height="14"><g fill="#444"><circle cx="3" cy="1.8" r="1.5"/><circle cx="3" cy="6.4" r="1.5"/><circle cx="3" cy="11" r="1.5"/></g></svg>
<div style="position:absolute;left:196.5px;top:640.19px;width:1486px;height:1px;background:#e6e6e6;"></div>
<svg style="position:absolute;left:207.6px;top:651.79px" width="15" height="15" viewBox="0 0 15 15"><circle cx="7.4" cy="7.4" r="7.3" fill="#0a7a14"/><path d="M2.9 7.3 L5.9 10.2 L11.9 4.2" fill="none" stroke="#f4fff4" stroke-width="1.8"/></svg>
<div class="t" style="left:233.3px;top:652.25px;font-size:10.8px;line-height:15px;color:#4a70d0;font-weight:normal;font-family:'Liberation Sans', sans-serif;">mongo-1</div>
<div class="t" style="left:597px;top:644.27px;font-size:10.45px;line-height:15px;color:#3a3a3a;font-weight:normal;font-family:'Liberation Sans', sans-serif;">ip-192-168-112-185.us-west-</div>
<div class="t" style="left:597px;top:659.67px;font-size:10.45px;line-height:15px;color:#3a3a3a;font-weight:normal;font-family:'Liberation Sans', sans-serif;">2.compute.internal</div>
<div class="t" style="left:815.2px;top:652.42px;font-size:10.6px;line-height:15px;color:#3a3a3a;font-weight:normal;font-family:'Liberation Sans', sans-serif;">Running</div>
<div class="t" style="left:1033.4px;top:652.42px;font-size:10.6px;line-height:15px;color:#3a3a3a;font-weight:normal;font-family:'Liberation Sans', sans-serif;">0</div>
<div class="t" style="left:1106.4px;top:652.42px;font-size:10.6px;line-height:15px;color:#3a3a3a;font-weight:normal;font-family:'Liberation Sans', sans-serif;">4 days</div>
<div style="position:absolute;left:1179px;top:652.39px;width:48px;height:14px;background:#00c34e;"></div>
<div class="t" style="left:1230.3px;top:652.85px;font-size:10.8px;line-height:15px;color:#3a3a3a;font-weight:normal;font-family:'Liberation Sans', sans-serif;">0.006</div>
<div style="position:absolute;left:1398px;top:652.29px;width:48px;height:14.2px;background:#2f68e0;"></div>
<div class="t" style="left:1449px;top:652.85px;font-size:10.8px;line-height:15px;color:#3a3a3a;font-weight:normal;font-family:'Liberation Sans', sans-serif;">215.781 Mi</div>
<svg style="position:absolute;left:1624px;top:652.99px" width="14" height="12"><g fill="#3a3a3a"><rect x="1" y="0.9" width="12" height="1.2"/><rect x="1" y="4.0" width="12" height="1.2"/><rect x="1" y="7.0" width="12" height="1.2"/><rect x="1" y="10.1" width="7" height="1.2"/></g></svg>
<svg style="position:absolute;left:1658px;top:652.69px" width="6" height="14"><g fill="#444"><circle cx="3" cy="1.8" r="1.5"/><circle cx="3" cy="6.4" r="1.5"/><circle cx="3" cy="11" r="1.5"/></g></svg>
<div style="position:absolute;left:196.5px;top:677.36px;width:1486px;height:1px;background:#e6e6e6;"></div>
<svg style="position:absolute;left:207.6px;top:688.96px" width="15" height="15" viewBox="0 0 15 15"><circle cx="7.4" cy="7.4" r="7.3" fill="#0a7a14"/><path d="M2.9 7.3 L5.9 10.2 L11.9 4.2" fill="none" stroke="#f4fff4" stroke-width="1.8"/></svg>
<div class="t" style="left:233.3px;top:689.42px;font-size:10.8px;line-height:15px;color:#4a70d0;font-weight:normal;font-family:'Liberation Sans', sans-serif;">fan-659bc95bf5-mkzr7</div>
<div class="t" style="left:597px;top:681.44px;font-size:10.45px;line-height:15px;color:#3a3a3a;font-weight:normal;font-family:'Liberation Sans', sans-serif;">ip-192-168-182-134.us-west-</div>
<div class="t" style="left:597px;top:696.84px;font-size:10.45px;line-height:15px;color:#3a3a3a;font-weight:normal;font-family:'Liberation Sans', sans-serif;">2.compute.internal</div>
<div class="t" style="left:815.2px;top:689.59px;font-size:10.6px;line-height:15px;color:#3a3a3a;font-weight:normal;font-family:'Liberation Sans', sans-serif;">Running</div>
<div class="t" style="left:1033.4px;top:689.59px;font-size:10.6px;line-height:15px;color:#3a3a3a;font-weight:normal;font-family:'Liberation Sans', sans-serif;">1</div>
<div class="t" style="left:1106.4px;top:689.59px;font-size:10.6px;line-height:15px;color:#3a3a3a;font-weight:normal;font-family:'Liberation Sans', sans-serif;">4 days</div>
<div style="position:absolute;left:1179px;top:689.5600000000001px;width:48px;height:14px;background:#00c34e;"></div>
<div class="t" style="left:1230.3px;top:690.02px;font-size:10.8px;line-height:15px;color:#3a3a3a;font-weight:normal;font-family:'Liberation Sans', sans-serif;">0.006</div>
<div style="position:absolute;left:1398px;top:689.46px;width:48px;height:14.2px;background:#2f68e0;"></div>
<div class="t" style="left:1449px;top:690.02px;font-size:10.8px;line-height:15px;color:#3a3a3a;font-weight:normal;font-family:'Liberation Sans', sans-serif;">419.227 Mi</div>
<svg style="position:absolute;left:1624px;top:690.16px" width="14" height="12"><g fill="#3a3a3a"><rect x="1" y="0.9" width="12" height="1.2"/><rect x="1" y="4.0" width="12" height="1.2"/><rect x="1" y="7.0" width="12" height="1.2"/><rect x="1" y="10.1" width="7" height="1.2"/></g></svg>
<svg style="position:absolute;left:1658px;top:689.86px" width="6" height="14"><g fill="#444"><circle cx="3" cy="1.8" r="1.5"/><circle cx="3" cy="6.4" r="1.5"/><circle cx="3" cy="11" r="1.5"/></g></svg>
<div style="position:absolute;left:196.5px;top:714.5300000000001px;width:1486px;height:1px;background:#e6e6e6;"></div>
<svg style="position:absolute;left:207.6px;top:726.13px" width="15" height="15" viewBox="0 0 15 15"><circle cx="7.4" cy="7.4" r="7.3" fill="#0a7a14"/><path d="M2.9 7.3 L5.9 10.2 L11.9 4.2" fill="none" stroke="#f4fff4" stroke-width="1.8"/></svg>
<div class="t" style="left:233.3px;top:726.59px;font-size:10.8px;line-height:15px;color:#4a70d0;font-weight:normal;font-family:'Liberation Sans', sans-serif;">fan-659bc95bf5-zbxsv</div>
<div class="t" style="left:597px;top:718.61px;font-size:10.45px;line-height:15px;color:#3a3a3a;font-weight:normal;font-family:'Liberation Sans', sans-serif;">ip-192-168-124-130.us-west-</div>
<div class="t" style="left:597px;top:734.01px;font-size:10.45px;line-height:15px;color:#3a3a3a;font-weight:normal;font-family:'Liberation Sans', sans-serif;">2.compute.internal</div>
<div class="t" style="left:815.2px;top:726.76px;font-size:10.6px;line-height:15px;color:#3a3a3a;font-weight:normal;font-family:'Liberation Sans', sans-serif;">Running</div>
<div class="t" style="left:1033.4px;top:726.76px;font-size:10.6px;line-height:15px;color:#3a3a3a;font-weight:normal;font-family:'Liberation Sans', sans-serif;">0</div>
<div class="t" style="left:1106.4px;top:726.76px;font-size:10.6px;line-height:15px;color:#3a3a3a;font-weight:normal;font-family:'Liberation Sans', sans-serif;">4 days</div>
<div style="position:absolute;left:1179px;top:726.73px;width:48px;height:14px;background:#00c34e;"></div>
<div class="t" style="left:1230.3px;top:727.19px;font-size:10.8px;line-height:15px;color:#3a3a3a;font-weight:normal;font-family:'Liberation Sans', sans-serif;">0.007</div>
<div style="position:absolute;left:1398px;top:726.63px;width:48px;height:14.2px;background:#2f68e0;"></div>
<div class="t" style="left:1449px;top:727.19px;font-size:10.8px;line-height:15px;color:#3a3a3a;font-weight:normal;font-family:'Liberation Sans', sans-serif;">462.176 Mi</div>
<svg style="position:absolute;left:1624px;top:727.33px" width="14" height="12"><g fill="#3a3a3a"><rect x="1" y="0.9" width="12" height="1.2"/><rect x="1" y="4.0" width="12" height="1.2"/><rect x="1" y="7.0" width="12" height="1.2"/><rect x="1" y="10.1" width="7" height="1.2"/></g></svg>
<svg style="position:absolute;left:1658px;top:727.03px" width="6" height="14"><g fill="#444"><circle cx="3" cy="1.8" r="1.5"/><circle cx="3" cy="6.4" r="1.5"/><circle cx="3" cy="11" r="1.5"/></g></svg>
<div style="position:absolute;left:196.5px;top:751.7px;width:1486px;height:1px;background:#e6e6e6;"></div>
<div class="t" style="left:1480.6px;top:760.83px;font-size:10.6px;line-height:15px;color:#555;font-weight:normal;font-family:'Liberation Sans', sans-serif;">1 - 10 of 13</div>
<svg style="position:absolute;left:1552.8px;top:760.2px" width="18" height="14" viewBox="0 0 24 19"><path fill="#6e6e6e" d="M18.41 15.59L13.83 11l4.58-4.59L17 5l-6 6 6 6zM6 5h2v12H6z"/></svg>
<svg style="position:absolute;left:1586.8px;top:760.2px" width="18" height="14" viewBox="0 0 24 19"><path fill="#6e6e6e" d="M15.41 6.41L14 5l-6 6 6 6 1.41-1.41L10.83 11z"/></svg>
<svg style="position:absolute;left:1619.8px;top:760.2px" width="18" height="14" viewBox="0 0 24 19"><path fill="#6e6e6e" d="M10 5L8.59 6.41 13.17 11l-4.58 4.59L10 17l6-6z"/></svg>
<svg style="position:absolute;left:1652.8px;top:760.2px" width="18" height="14" viewBox="0 0 24 19"><path fill="#6e6e6e" d="M5.59 6.41L10.17 11l-4.58 4.59L7 17l6-6-6-6zM16 5h2v12h-2z"/></svg>
</body></html>
